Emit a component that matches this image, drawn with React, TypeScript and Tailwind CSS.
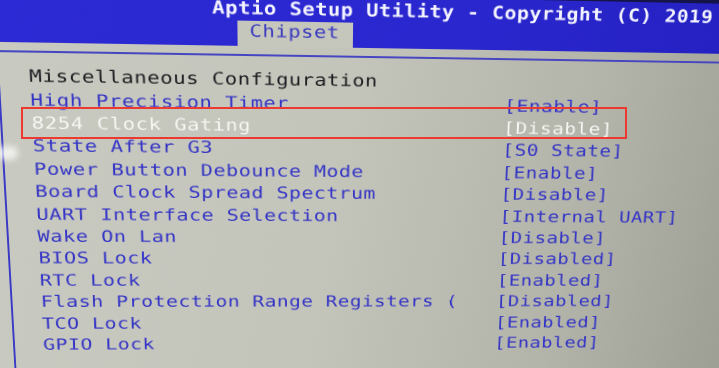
import React from "react";

type Row = { label: string; value?: string; kind?: "title" | "selected" };

const rows: Row[] = [
  { label: "Miscellaneous Configuration", kind: "title" },
  { label: "High Precision Timer", value: "[Enable]" },
  { label: "8254 Clock Gating", value: "[Disable]", kind: "selected" },
  { label: "State After G3", value: "[S0 State]" },
  { label: "Power Button Debounce Mode", value: "[Enable]" },
  { label: "Board Clock Spread Spectrum", value: "[Disable]" },
  { label: "UART Interface Selection", value: "[Internal UART]" },
  { label: "Wake On Lan", value: "[Disable]" },
  { label: "BIOS Lock", value: "[Disabled]" },
  { label: "RTC Lock", value: "[Enabled]" },
  { label: "Flash Protection Range Registers (", value: "[Disabled]" },
  { label: "TCO Lock", value: "[Enabled]" },
  { label: "GPIO Lock", value: "[Enabled]" },
];

export default function App() {
  return (
    <div className="relative w-[719px] h-[368px] overflow-hidden bg-[#b9bab0] font-['DejaVu_Sans_Mono','Liberation_Mono',monospace]">
      {/* whole screen, photographed at an angle -> one perspective transform */}
      <div className="-ml-[40px] -mt-[20px] w-[840px] h-[440px] flex flex-col origin-[40px_20px] [transform:matrix3d(1.025409,0.01984,0,0.0000693255,0.058952,1.041591,0,0.000201065,0,0,1,0,-5.99367,-2.5576,0,1)] bg-[linear-gradient(100deg,#c9cac1_0%,#c3c4ba_45%,#b2b3a9_75%,#9b9c91_100%)]">
        <div className="h-[12px] bg-[#15144a]" />

        {/* header */}
        <div className="h-[50.8px] flex flex-col bg-[linear-gradient(90deg,#2c2ad4,#2a27cf_60%,#2420c0)]">
          <div className="pl-[255.7px] pt-[6px] text-[21px] leading-[17px] font-bold tracking-[0.4px] text-[#f4f4ff] whitespace-nowrap scale-y-[0.85]">
            Aptio Setup Utility - Copyright (C) 2019
          </div>
          <div className="ml-[280.6px] mt-[2.5px] w-[118.3px] flex-1 bg-[#c5c6bc] pl-[12.6px] pt-[2.5px]">
            <div className="text-[21px] leading-[17px] tracking-[0.5px] text-[#3b3bbf] scale-y-[0.8]">
              Chipset
            </div>
          </div>
        </div>

        <div className="h-[8.4px]" />
        <div className="h-[2px] bg-[#4646c2]" />

        {/* panel */}
        <div className="flex flex-1">
          <div className="w-[39px]" />
          <div className="w-[2px] bg-[#3a3ac6]" />
          <div className="pl-[29.4px] pt-[12px]">
            {rows.map((r) => {
              const color =
                r.kind === "title"
                  ? "text-[#1d1d21]"
                  : r.kind === "selected"
                  ? "text-[#f7f7f4]"
                  : "text-[#3434c6]";
              return (
                <div
                  key={r.label}
                  className={`grid grid-cols-[489px_auto] text-[21px] leading-[23.4px] tracking-[0.5px] whitespace-nowrap scale-y-[0.81] ${color}`}
                >
                  <span>{r.label}</span>
                  <span>{r.value}</span>
                </div>
              );
            })}
          </div>
        </div>
      </div>

      {/* glare on the glass */}
      <div className="absolute left-[-4px] top-[146px] w-[22px] h-[14px] rounded-full bg-white/70 blur-[3px]" />

      {/* red annotation box */}
      <div className="absolute left-[21px] top-[107px] w-[606px] h-[32px] border-2 border-[#ec3a31]" />
    </div>
  );
}
